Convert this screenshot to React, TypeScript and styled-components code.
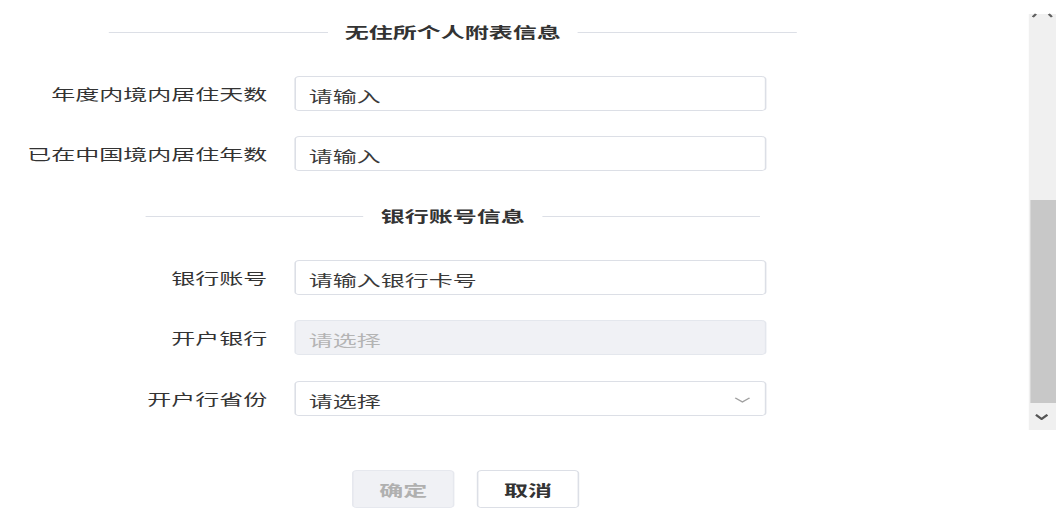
import styled, { createGlobalStyle } from "styled-components";

// the shot is stretched 1.6x horizontally, so the page is laid out at 663px and scaled
const SCALE = 1.6;

const GlobalStyle = createGlobalStyle`
  html, body {
    margin: 0;
    padding: 0;
    background: #fff;
    overflow: hidden;
  }
  body {
    font-family: "Noto Sans CJK SC", "Noto Sans", sans-serif;
    color: #333;
  }
`;

const StyledPage = styled.div`
  width: ${1061 / SCALE}px;
  height: 513px;
  display: flex;
  transform: scaleX(${SCALE});
  transform-origin: 0 0;
`;

const StyledForm = styled.div`
  width: 642.5px;
  display: flex;
  flex-direction: column;
`;

const StyledColumn = styled.div`
  width: 566px;
  display: flex;
  flex-direction: column;
`;

const StyledDivider = styled.div<{ $top: number }>`
  height: 20px;
  margin-top: ${(p) => p.$top}px;
  display: flex;
  align-items: center;
  justify-content: center;
  gap: 10.5px;
  &::before,
  &::after {
    content: "";
    width: 136.5px;
    height: 1px;
    background: #dcdfe6;
  }
`;

const StyledDividerText = styled.span`
  font-size: 15px;
  font-weight: 700;
  color: #333;
  line-height: 20px;
`;

const StyledRow = styled.div<{ $top: number }>`
  display: flex;
  align-items: center;
  height: 35px;
  margin-top: ${(p) => p.$top}px;
`;

const StyledLabel = styled.label`
  width: 167px;
  text-align: right;
  font-size: 15px;
  color: #333;
  white-space: nowrap;
`;

const StyledInput = styled.div<{ $disabled?: boolean }>`
  margin-left: 17px;
  width: 295px;
  height: 35px;
  box-sizing: border-box;
  border: 1px solid ${(p) => (p.$disabled ? "#e4e7ed" : "#dcdfe6")};
  border-radius: 3px;
  background: ${(p) => (p.$disabled ? "#f0f1f5" : "#fff")};
  display: flex;
  align-items: center;
  justify-content: space-between;
  padding: 3px 9px 0 8px;
  font-size: 15px;
  color: ${(p) => (p.$disabled ? "#b4b4b4" : "#3a3a3a")};
`;

const StyledButtons = styled.div`
  margin-top: 54px;
  padding-left: 220px;
  display: flex;
  gap: 14px;
`;

const StyledButton = styled.button<{ $disabled?: boolean }>`
  width: 64px;
  height: 38px;
  box-sizing: border-box;
  border: 1px solid ${(p) => (p.$disabled ? "#e6e8ee" : "#dcdfe6")};
  border-radius: 3px;
  background: ${(p) => (p.$disabled ? "#f0f1f5" : "#fff")};
  color: ${(p) => (p.$disabled ? "#b0b0b0" : "#333")};
  font-family: "Noto Sans CJK SC", "Noto Sans", sans-serif;
  font-size: 15px;
  font-weight: 700;
  padding: 0;
`;

const StyledScrollbar = styled.div`
  width: 17px;
  height: 416px;
  margin-top: 14px;
  background: #f0f0f0;
  display: flex;
  flex-direction: column;
  position: relative;
`;

const StyledTopArrow = styled.svg`
  position: absolute;
  top: -1px;
  left: 2px;
`;

const StyledThumb = styled.div`
  margin-top: 186px;
  margin-left: 1.5px;
  height: 203px;
  background: #c8c8c8;
`;

const StyledDownArrow = styled.div`
  height: 27px;
  display: flex;
  align-items: center;
  justify-content: center;
`;

const Chevron = ({ color, w, h, sw }: { color: string; w: number; h: number; sw: number }) => (
  <svg width={w} height={h} viewBox="0 0 10 6" preserveAspectRatio="none">
    <path d="M0.5 0.8 L5 5 L9.5 0.8" fill="none" stroke={color} strokeWidth={sw} />
  </svg>
);

const rowsTop = [
  { label: "年度内境内居住天数", value: "请输入", top: 34 },
  { label: "已在中国境内居住年数", value: "请输入", top: 25 },
];

export default function App() {
  return (
    <>
      <GlobalStyle />
      <StyledPage>
        <StyledForm>
          <StyledColumn>
            <StyledDivider $top={22}>
              <StyledDividerText>无住所个人附表信息</StyledDividerText>
            </StyledDivider>
            {rowsTop.map((r) => (
              <StyledRow key={r.label} $top={r.top}>
                <StyledLabel>{r.label}</StyledLabel>
                <StyledInput>{r.value}</StyledInput>
              </StyledRow>
            ))}
            <StyledDivider $top={35}>
              <StyledDividerText>银行账号信息</StyledDividerText>
            </StyledDivider>
            <StyledRow $top={34}>
              <StyledLabel>银行账号</StyledLabel>
              <StyledInput>请输入银行卡号</StyledInput>
            </StyledRow>
            <StyledRow $top={25}>
              <StyledLabel>开户银行</StyledLabel>
              <StyledInput $disabled>请选择</StyledInput>
            </StyledRow>
            <StyledRow $top={26}>
              <StyledLabel>开户行省份</StyledLabel>
              <StyledInput>
                请选择
                <Chevron color="#a0a0a0" w={10} h={6} sw={1.1} />
              </StyledInput>
            </StyledRow>
          </StyledColumn>
          <StyledButtons>
            <StyledButton $disabled>确定</StyledButton>
            <StyledButton>取消</StyledButton>
          </StyledButtons>
        </StyledForm>
        <StyledScrollbar>
          <StyledTopArrow width="13" height="5" viewBox="0 0 13 5">
            <path d="M0.5 4 L2.5 1" stroke="#606060" strokeWidth="1.6" />
            <path d="M12.5 4 L10.5 1" stroke="#606060" strokeWidth="1.6" />
          </StyledTopArrow>
          <StyledThumb />
          <StyledDownArrow>
            <Chevron color="#555" w={8} h={6} sw={2} />
          </StyledDownArrow>
        </StyledScrollbar>
      </StyledPage>
    </>
  );
}
